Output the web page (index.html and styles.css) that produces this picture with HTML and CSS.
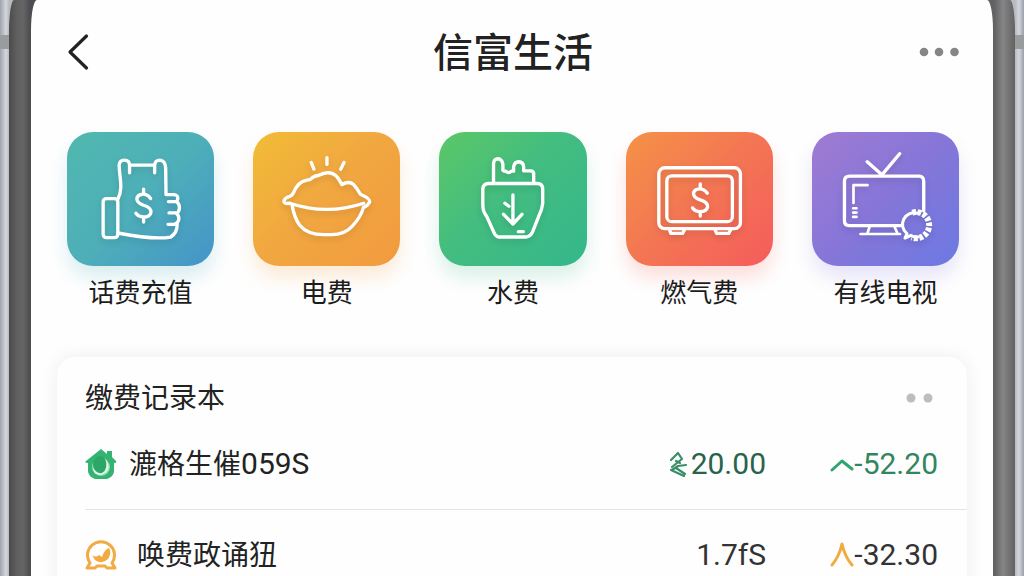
FILE: index.html
```
<!DOCTYPE html>
<html lang="zh-CN">
<head>
    <meta charset="UTF-8">
    <meta name="viewport" content="width=device-width, initial-scale=1">
    <title>信富生活</title>
    <link rel="stylesheet" href="styles.css">
</head>
<body>

<div class="phone">
    <main class="screen">
        <header class="topbar">
            <button class="icon-btn" aria-label="返回">
                <svg width="24" height="40" viewBox="0 0 24 40"><path d="M19.500 4 3 20 19.500 36" fill="none" stroke="#222" stroke-width="3.200" stroke-linecap="round" stroke-linejoin="round"/></svg>
            </button>
            <h1>信富生活</h1>
            <button class="icon-btn more" aria-label="更多">
                <svg width="40" height="10" viewBox="0 0 40 10" fill="#858585"><circle cx="5" cy="5" r="4.300"/><circle cx="20" cy="5" r="4.300"/><circle cx="35.500" cy="5" r="4.300"/></svg>
            </button>
        </header>

        <nav class="services">
            <a class="service" href="#phone">
                <span class="tile teal">
                    <svg viewBox="0 0 440 400">
                        <rect x="108" y="199" width="44" height="117" rx="10"/>
                        <path d="M152 201C170 168 155 130 156 98Q158 84 171 84Q187 84 187 99V122M187 99H262M262 122V99Q263 84 278 84Q294 86 295 108L296 187H320Q333 189 331 200Q330 208 324 208H303M326 208Q337 214 336 228Q335 241 325 242H305M325 242Q336 249 334 262Q330 275 318 276H302M329 270Q332 300 310 314Q260 323 152 302"/>
                        <path d="M250 199Q240 185 225 186Q208 188 209 202Q211 213 229 219Q252 226 251 240Q248 254 229 254Q214 254 206 243M229 171V186M229 254V269"/>
                    </svg>
                </span>
                <span class="label">话费充值</span>
            </a>
            <a class="service" href="#power">
                <span class="tile orange">
                    <svg viewBox="0 0 440 400">
                        <path d="M110 213Q90 216 93 205Q96 196 108 193Q118 190 122 180Q134 149 161 144Q171 144 178 136Q187 130 195 130Q231 111 253 136L266 157Q287 145 301 157Q312 169 321 186Q349 198 349 208Q344 220 331 226M110 213Q220 250 331 213M117 220Q124 257 139 278Q162 307 212 307H234Q275 306 296 282Q324 253 330 225"/>
                        <path d="M174 91 182 111M221 77V97M272 91 262 111"/>
                    </svg>
                </span>
                <span class="label">电费</span>
            </a>
            <a class="service" href="#water">
                <span class="tile green">
                    <svg viewBox="0 0 440 400">
                        <path d="M163 149V94Q165 80 176 80Q188 81 191 96V114Q194 118 200 117Q208 126 216 117H223V104Q226 89 238 89Q252 90 253 104V116H275Q284 117 283 127V149"/>
                        <path d="M148 154H294Q310 155 310 170V214Q308 232 298 252L280 298Q274 313 260 314H180Q169 313 164 300L143 253Q131 238 131 219V170Q132 155 148 154ZM221 188V275M193 246 221 275 248 246M197 213 209 222M237 298H252"/>
                    </svg>
                </span>
                <span class="label">水费</span>
            </a>
            <a class="service" href="#gas">
                <span class="tile red">
                    <svg viewBox="0 0 440 400">
                        <rect x="98" y="107" width="244" height="182" rx="18"/>
                        <rect x="122" y="131" width="196" height="137" rx="15"/>
                        <path d="M130 292 134 303H169L175 292M266 292 271 303H307L313 292"/>
                        <path d="M243 183Q233 169 218 170Q201 172 202 186Q204 197 222 203Q245 210 244 224Q241 238 222 238Q207 238 199 227M222 155V170M222 238V251"/>
                    </svg>
                </span>
                <span class="label">燃气费</span>
            </a>
            <a class="service" href="#tv">
                <span class="tile purple">
                    <svg viewBox="0 0 440 400">
                        <path d="M265 280H112Q97 279 97 265V146Q98 132 112 132H320Q334 133 334 147V236M165 89 209 128 262 65"/>
                        <path d="M124 212V159H166M123 228H133M123 241H133M123 254H133M145 305H263M172 284 166 302M247 284 255 302" stroke-width="8"/>
                        <path d="M316 243A35 35 0 0 0 284 304L278 317 296 309Q304 315 316 314" stroke-width="9"/>
                        <path d="M300 241A39 39 0 1 1 298 315" stroke-width="18" stroke-linecap="butt" stroke-dasharray="11 5"/>
                    </svg>
                </span>
                <span class="label">有线电视</span>
            </a>
        </nav>

        <section class="card">
            <div class="card-head">
                <h2>缴费记录本</h2>
                <button class="icon-btn" aria-label="更多记录">
                    <svg width="32" height="10" viewBox="0 0 32 10" fill="#bdbdbd"><circle cx="6" cy="5" r="4.500"/><circle cx="23" cy="5" r="4.500"/></svg>
                </button>
            </div>
            <ul class="records">
                <li class="record">
                    <svg class="badge" viewBox="0 0 32 32">
                        <path d="M16 1 22 6V3H27V9L31 13Q32 15 29 15V24Q28 29 22 31H10Q3 28 3 23V15Q-1 15 1 13Z" fill="#35b373"/>
                        <circle cx="16" cy="19" r="9" fill="#92dcb1"/>
                        <ellipse cx="15" cy="17" rx="7" ry="9" fill="#2da768"/>
                        <path d="M20 10Q29 23 16 27Q8 27 8 19Q11 26 17 25Q24 21 20 10Z" fill="#e4f7eb"/>
                    </svg>
                    <span class="name">漉格生催<span class="num">059S</span></span>
                    <span class="amount dark-green">
                        <svg width="20" height="28" viewBox="0 0 20 28"><path d="M2 10 9 3 13 9 3 17M7 11 11 13M3 20 9 16 17 15M2 20 15 26M7 18 16 24" stroke="#388e66" stroke-width="2.200"/></svg>20.00
                    </span>
                    <span class="amount change up">
                        <svg width="24" height="28" viewBox="0 0 24 28"><path d="M2 20 12 11 22 19" stroke="#2fa670"/></svg>-52.20
                    </span>
                </li>
                <li class="record">
                    <svg class="badge" viewBox="0 0 32 32">
                        <path d="M5 25A13.500 13.500 0 1 1 27 25L30 30H22L20 28H12L10 30H2Z" fill="#fff" stroke="#f2aa42" stroke-width="3" stroke-linejoin="round"/>
                        <path d="M7 17Q11 20 14 17L17 19Q19 12 24 10Q27 15 23 21Q17 27 10 22Z" fill="#f2aa42"/>
                    </svg>
                    <span class="name indent">唤费政诵狃</span>
                    <span class="amount">1.7fS</span>
                    <span class="amount change">
                        <svg width="24" height="28" viewBox="0 0 24 28"><path d="M2 25Q9 17 12 4Q15 17 22 25" stroke="#efac3f"/></svg>-32.30
                    </span>
                </li>
            </ul>
        </section>
    </main>
</div>

</body>
</html>
```
FILE: styles.css
```
* {
    box-sizing: border-box;
}

html {
    scrollbar-width: none;
}

body {
    margin: 0;
    padding: 0 9px;
    font-family: "Noto Sans CJK SC", sans-serif;
    color: #222;
    background: linear-gradient(transparent 35px, #999b9d 35px, #999b9d 49px, transparent 49px),
        linear-gradient(90deg, #9ea2ae, #d5d7dc 6px, #b7bac0 9px, #b7bac0 calc(100% - 9px), #d4d6de calc(100% - 5px), #9b9dab);
}

.phone {
    min-height: 100vh;
    padding: 0 22px;
    border-radius: 5px 5px 0 0 / 32px 32px 0 0;
    background: linear-gradient(90deg, #4b4b4c, #606060 8px, #666 14px, #4c4d50 21px, #777 50%, #606163 calc(100% - 21px), #858585 calc(100% - 12px), #626262);
}

.screen {
    min-height: 100vh;
    padding: 0 26px;
    border-radius: 6px 6px 0 0 / 30px 30px 0 0;
    background: #fefefe;
}

/* 顶部栏 */
.topbar {
    display: grid;
    grid-template-columns: 40px 1fr 40px;
    align-items: center;
    height: 104px;
    padding: 0 8px 0 10px;
}

h1 {
    margin: 0;
    padding-bottom: 4px;
    font-size: 40px;
    line-height: 56px;
    font-weight: 500;
    text-align: center;
}

.icon-btn {
    display: flex;
    align-items: center;
    padding: 0;
    border: none;
    background: none;
    cursor: pointer;
}

/* 缴费入口 */
.services {
    display: grid;
    grid-template-columns: repeat(5, 1fr);
    gap: 39px;
    padding: 28px 8px 0 10px;
}

.service {
    display: flex;
    flex-direction: column;
    align-items: center;
    color: #1c1c1c;
    text-decoration: none;
}

.tile {
    width: 100%;
    border-radius: 26px;
}

.tile svg {
    display: block;
    width: 100%;
    fill: none;
    stroke: #fff;
    stroke-width: 10;
    stroke-linecap: round;
    stroke-linejoin: round;
    filter: drop-shadow(0 3px 3px rgba(0, 0, 0, 0.12));
}

.teal {
    background: linear-gradient(135deg, #50b8ae, #4eafb9 50%, #4494c8);
    box-shadow: 0 12px 18px rgba(78, 175, 190, 0.2);
}

.orange {
    background: linear-gradient(135deg, #f2bc36, #f1a840 45%, #f29a40);
    box-shadow: 0 12px 18px rgba(242, 160, 64, 0.2);
}

.green {
    background: linear-gradient(135deg, #5cc766, #43bd80 45%, #35b78c);
    box-shadow: 0 12px 18px rgba(60, 185, 135, 0.18);
}

.red {
    background: linear-gradient(135deg, #f59247, #f37553 50%, #f55c5c);
    box-shadow: 0 12px 18px rgba(244, 100, 88, 0.2);
}

.purple {
    background: linear-gradient(135deg, #a07bd3, #8676d8 50%, #6c79e3);
    box-shadow: 0 12px 18px rgba(125, 115, 220, 0.18);
}

.label {
    margin-top: 6px;
    font-size: 26px;
    line-height: 38px;
    white-space: nowrap;
}

/* 缴费记录 */
.card {
    margin-top: 47px;
    padding: 20px 0 0 28px;
    border-radius: 18px 18px 0 0;
    background: #fefefe;
    box-shadow: 0 0 18px rgba(0, 0, 0, 0.07);
}

.card-head {
    display: flex;
    align-items: center;
    justify-content: space-between;
    height: 42px;
    padding-right: 30px;
}

h2 {
    margin: 0;
    padding-bottom: 3px;
    font-size: 28px;
    font-weight: 400;
}

.records {
    margin: 0;
    padding: 0;
    list-style: none;
}

.record {
    display: flex;
    align-items: center;
    height: 90px;
    padding-right: 29px;
    gap: 12px;
}

.record + .record {
    border-top: 1px solid #e4e4e4;
}

.badge {
    flex: none;
    width: 32px;
    height: 32px;
}

.name {
    flex: 1;
    padding-bottom: 3px;
    font-size: 28px;
}

.indent {
    padding-left: 8px;
}

.num,
.amount {
    font-family: Roboto, "Noto Sans CJK SC", sans-serif;
    font-size: 30px;
}

.amount {
    display: flex;
    align-items: center;
    justify-content: flex-end;
    color: #333;
}

.amount svg {
    margin-right: 2px;
    fill: none;
    stroke-width: 3;
    stroke-linecap: round;
    stroke-linejoin: round;
}

.change {
    width: 160px;
}

.change svg {
    margin-right: 0;
}

.dark-green {
    color: #28634b;
}

.up {
    color: #32865f;
}
```
